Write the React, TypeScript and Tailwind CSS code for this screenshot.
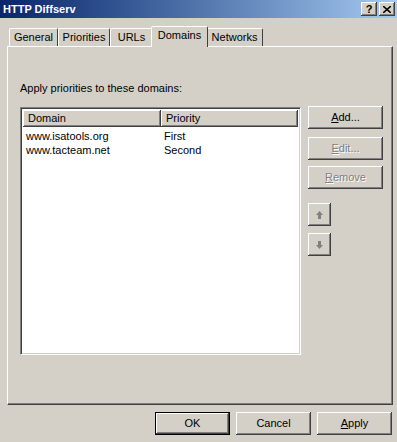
import { ReactNode } from 'react';

const raised =
  'bg-[#d4d0c8] shadow-[inset_-1px_-1px_#404040,inset_1px_1px_#ffffff,inset_-2px_-2px_#808080,inset_2px_2px_#d4d0c8]';

const Btn = ({ children, className = '', disabled = false }: { children: ReactNode; className?: string; disabled?: boolean }) => (
  <div
    className={`${raised} flex items-center justify-center text-[11px] ${
      disabled ? 'text-[#808080] [text-shadow:1px_1px_#ffffff]' : 'text-black'
    } ${className}`}
  >
    {children}
  </div>
);

const Tab = ({ label, active = false, width }: { label: string; active?: boolean; width: string }) => (
  <div
    className={`${width} flex items-center justify-center border-t border-l border-white border-r border-r-[#404040] rounded-t-[2px] bg-[#d4d0c8] text-[11px] ${
      active ? 'h-[21px] -mx-[2px] z-10 relative pb-[3px]' : 'h-[18px] mt-[2px]'
    }`}
  >
    {label}
  </div>
);

const Arrow = ({ up }: { up: boolean }) => (
  <svg width="7" height="8" viewBox="0 0 7 8" className={up ? '' : 'rotate-180'}>
    <path d="M3.5 0 L7 4 L5 4 L5 8 L2 8 L2 4 L0 4 Z" fill="#808080" />
  </svg>
);

export default function App() {
  return (
    <div
      className="w-[397px] h-[442px] bg-[#d4d0c8] flex flex-col overflow-hidden text-black"
      style={{ fontFamily: 'Tahoma, "Liberation Sans", Arial, sans-serif' }}
    >
      {/* title bar */}
      <div className="h-[18px] flex items-center justify-between pl-[3px] pr-[2px] bg-gradient-to-r from-[#0a246a] to-[#a6caf0]">
        <span className="text-white font-bold text-[11px]">HTTP Diffserv</span>
        <div className="flex gap-[2px]">
          <Btn className="w-[16px] h-[14px] font-bold text-[11px]">?</Btn>
          <Btn className="w-[16px] h-[14px]">
            <svg width="8" height="7" viewBox="0 0 8 7">
              <path d="M0 0 L8 7 M8 0 L0 7" stroke="black" strokeWidth="1.6" />
            </svg>
          </Btn>
        </div>
      </div>

      {/* tabs */}
      <div className="flex mt-[8px] ml-[9px] h-[20px] items-start">
        <Tab label="General" width="w-[49px]" />
        <Tab label="Priorities" width="w-[52px]" />
        <Tab label="URLs" width="w-[43px]" />
        <Tab label="Domains" width="w-[57px]" active />
        <Tab label="Networks" width="w-[57px]" />
      </div>

      {/* panel */}
      <div className="ml-[7px] w-[386px] h-[359px] border-t border-l border-white border-r border-b border-r-[#404040] border-b-[#404040] shadow-[inset_-1px_-1px_#808080] pl-[12px] pr-[4px] pt-[35px] flex flex-col">
        <div className="text-[11px] h-[13px] leading-[13px]">Apply priorities to these domains:</div>
        <div className="flex mt-[12px] gap-[7px]">
          {/* list */}
          <div className="w-[281px] shrink-0 h-[248px] bg-white border border-t-[#808080] border-l-[#808080] border-r-white border-b-white shadow-[inset_1px_1px_#404040,inset_-1px_-1px_#d4d0c8] p-[2px] flex flex-col">
            <div className="flex h-[17px]">
              <div className={`${raised} w-[138px] flex items-center pl-[5px] text-[11px]`}>Domain</div>
              <div className={`${raised} flex-1 flex items-center pl-[5px] text-[11px]`}>Priority</div>
            </div>
            {[
              ['www.isatools.org', 'First'],
              ['www.tacteam.net', 'Second'],
            ].map(([d, p], i) => (
              <div key={d} className={`flex h-[14px] items-center text-[11px] ${i === 0 ? 'mt-[2px]' : ''}`}>
                <span className="w-[138px] pl-[3px]">{d}</span>
                <span className="pl-[3px]">{p}</span>
              </div>
            ))}
          </div>

          {/* buttons */}
          <div className="flex flex-col">
            <Btn className="w-[75px] h-[23px] -mt-[1px]">
              <span>
                <u>A</u>dd...
              </span>
            </Btn>
            <Btn className="w-[75px] h-[23px] mt-[8px]" disabled>
              <span>
                <u>E</u>dit...
              </span>
            </Btn>
            <Btn className="w-[75px] h-[23px] mt-[6px]" disabled>
              <span>
                <u>R</u>emove
              </span>
            </Btn>
            <Btn className="w-[23px] h-[23px] mt-[14px]">
              <Arrow up />
            </Btn>
            <Btn className="w-[23px] h-[23px] mt-[7px]">
              <Arrow up={false} />
            </Btn>
          </div>
        </div>
      </div>

      {/* bottom buttons */}
      <div className="flex justify-end gap-[6px] pr-[5px] mt-[7px]">
        <div className="border border-black">
          <Btn className="w-[73px] h-[21px]">OK</Btn>
        </div>
        <Btn className="w-[75px] h-[23px]">Cancel</Btn>
        <Btn className="w-[75px] h-[23px]">
          <span>
            <u>A</u>pply
          </span>
        </Btn>
      </div>
    </div>
  );
}
